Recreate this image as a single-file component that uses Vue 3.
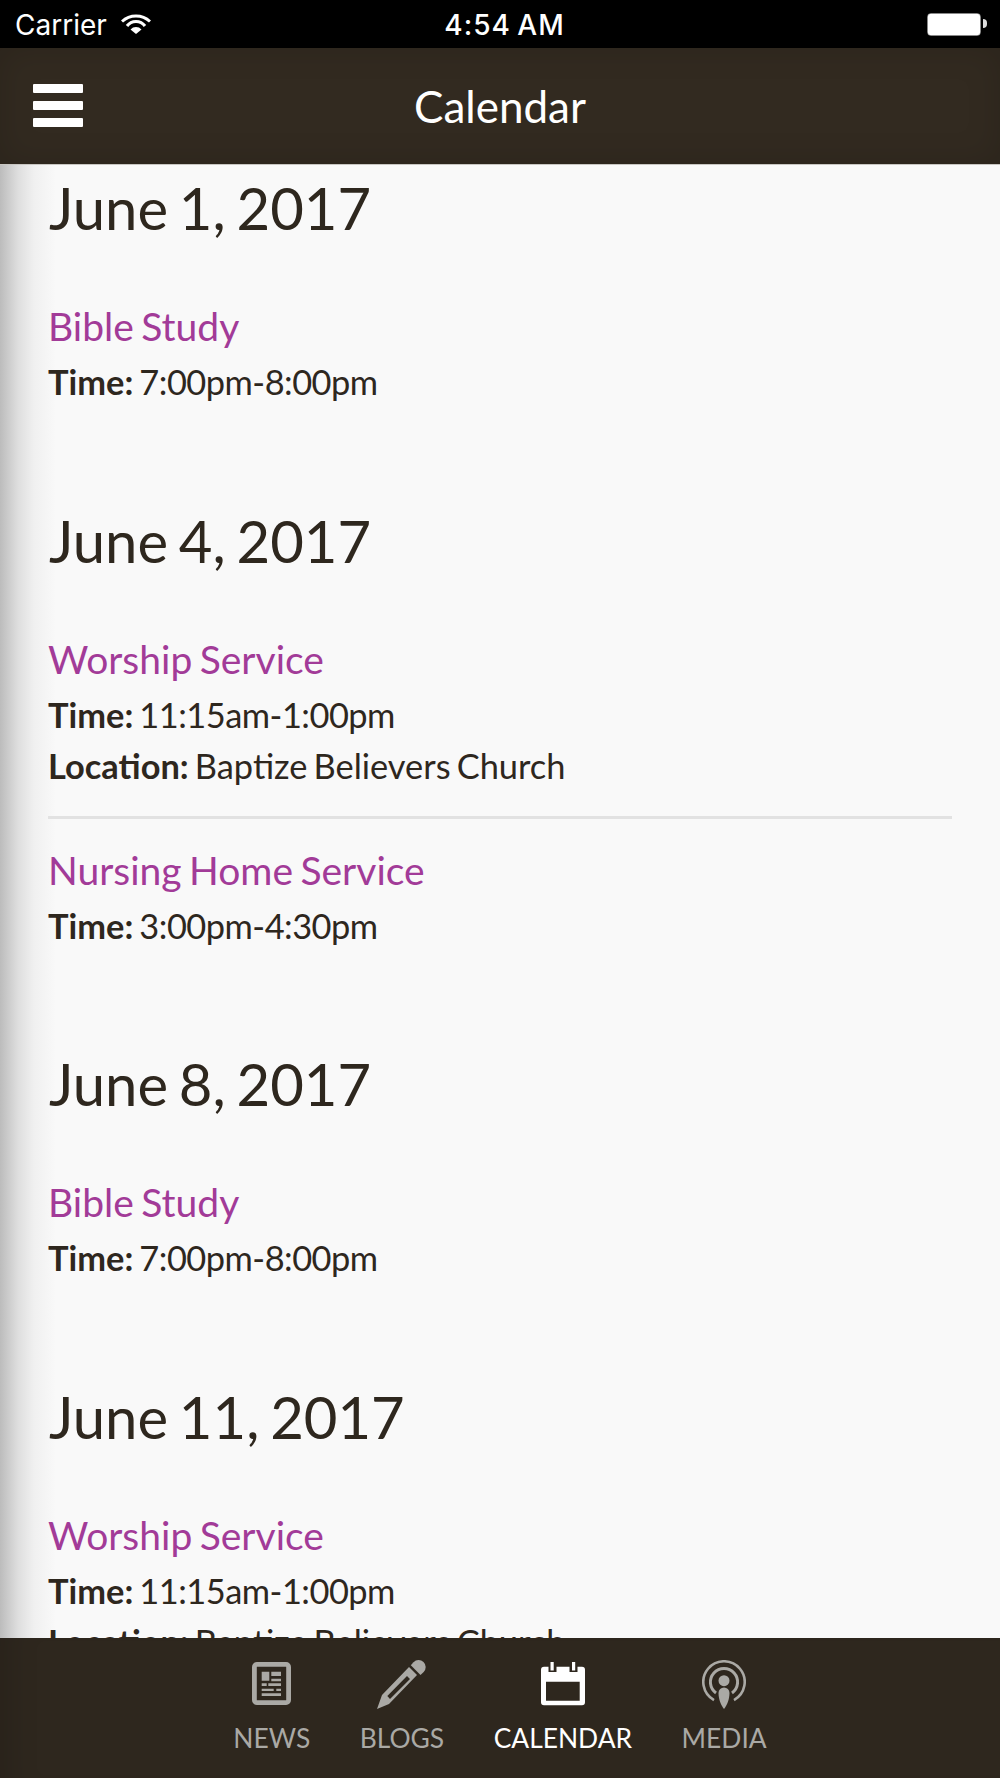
<script setup>
const days = [
  { date: 'June 1, 2017', events: [{ title: 'Bible Study', time: '7:00pm-8:00pm' }] },
  { date: 'June 4, 2017', events: [
    { title: 'Worship Service', time: '11:15am-1:00pm', location: 'Baptize Believers Church' },
    { title: 'Nursing Home Service', time: '3:00pm-4:30pm' }] },
  { date: 'June 8, 2017', events: [{ title: 'Bible Study', time: '7:00pm-8:00pm' }] },
  { date: 'June 11, 2017', events: [{ title: 'Worship Service', time: '11:15am-1:00pm', location: 'Baptize Believers Church' }] }
]
</script>

<template>
  <div class="phone">
    <header class="status">
      <div class="status-left">
        <span>Carrier</span>
        <svg class="wifi" viewBox="0 0 30 20" width="30" height="20">
          <path d="M1 7.500A20.500 20.500 0 0 1 29 7.500" fill="none" stroke="#fff" stroke-width="3"/>
          <path d="M6 12A11.200 11.200 0 0 1 24 12" fill="none" stroke="#fff" stroke-width="3"/>
          <path d="M9.500 15.500a7.500 7.500 0 0 1 11 0L15 20z" fill="#fff"/>
        </svg>
      </div>
      <span class="clock">4:54 AM</span>
      <div class="battery"><div class="battery-fill"></div><span class="nub"></span></div>
    </header>

    <nav class="navbar">
      <div class="burger"><i></i><i></i><i></i></div>
      <h1>Calendar</h1>
    </nav>

    <main class="content">
      <section v-for="day in days" :key="day.date" class="day">
        <h2>{{ day.date }}</h2>
        <article v-for="(ev, i) in day.events" :key="i" class="event">
          <h3>{{ ev.title }}</h3>
          <p><b>Time:</b> <span class="time">{{ ev.time }}</span></p>
          <p v-if="ev.location"><b>Location:</b> {{ ev.location }}</p>
        </article>
      </section>
    </main>

    <footer class="tabs">
      <div class="tab">
        <svg viewBox="0 0 39 49" width="39" height="49">
          <rect x="2.400" y="4.400" width="34.200" height="38.200" rx="2.500" fill="none" stroke="currentColor" stroke-width="4.800"/>
          <path d="M9.700 11.700h7.600v9h-7.600zM19.300 11.700H29V16h-9.700zM19.300 18.700H29v2.600h-9.700zM9.700 23.300h5V26h-5zM16.300 23.300H29V26H16.300zM9.700 28.700h12V31h-12zM24.300 28.700H29V31h-4.700zM9.700 33.300H29V36H9.700z" fill="currentColor"/>
        </svg>
        <span>NEWS</span>
      </div>
      <div class="tab">
        <svg viewBox="0 0 49 49" width="49" height="49">
          <path d="M33.800 5.200l2.700-3A7 7 0 0 1 46.700 12l-3.200 3z" fill="currentColor"/>
          <path fill-rule="evenodd" d="M32 7l8 8L12 44 0 49l5-14zM30 16L10.300 36l2.700 3 20-20z" fill="currentColor"/>
        </svg>
        <span>BLOGS</span>
      </div>
      <div class="tab">
        <svg class="active-icon" viewBox="0 0 44 49" width="44" height="49">
          <path fill-rule="evenodd" d="M3 6.700h4.500V12h8V6.700h13V12h8V6.700H41a3 3 0 0 1 3 3v32.600a3 3 0 0 1-3 3H3a3 3 0 0 1-3-3V9.700a3 3 0 0 1 3-3zM5 21.700v19h33.700v-19z" fill="currentColor"/>
          <path d="M9.500 2h3.200v8.500H9.500zM31 2h3.200v8.500H31z" fill="currentColor"/>
        </svg>
        <span class="active">CALENDAR</span>
      </div>
      <div class="tab">
        <svg viewBox="0 0 44 49" width="44" height="49">
          <path d="M12 40.100A20.700 20.700 0 1 1 32 40.100" fill="none" stroke="currentColor" stroke-width="2.600"/>
          <path d="M14 33A13.600 13.600 0 1 1 30 33" fill="none" stroke="currentColor" stroke-width="3"/>
          <circle cx="22" cy="20.700" r="5.500" fill="currentColor"/>
          <path d="M16.500 33a5.500 5.500 0 0 1 11 0c0 6-2.500 12.500-5.500 16-3-3.500-5.500-10-5.500-16z" fill="currentColor"/>
        </svg>
        <span>MEDIA</span>
      </div>
    </footer>
  </div>
</template>

<style scoped>
.phone {
  width: 1000px;
  height: 1778px;
  display: flex;
  flex-direction: column;
  overflow: hidden;
  font-family: Lato, "Open Sans", sans-serif;
  color: #2e271e;
  background: #f9f9f9;
}
.status {
  box-sizing: border-box;
  height: 48px;
  flex: none;
  background: #000;
  color: #fff;
  display: grid;
  grid-template-columns: 1fr auto 1fr;
  align-items: center;
  padding: 2px 14px 0 15px;
  font-size: 28px;
  font-family: Inter, "Open Sans", sans-serif;
}
.status-left { display: flex; align-items: center; gap: 14px; }
.clock { font-weight: 500; letter-spacing: 1px; word-spacing: -2px; margin-left: 8px; }
.wifi { margin-top: -2px; }
.battery {
  box-sizing: border-box;
  position: relative;
  justify-self: end;
  width: 54px;
  height: 23px;
  border: 1.500px solid #888;
  border-radius: 4px;
  margin-right: 5px;
  margin-top: -1px;
}
.battery-fill { height: 100%; background: #fff; border-radius: 2px; }
.nub {
  position: absolute;
  right: -7px;
  top: 5px;
  width: 4px;
  height: 9px;
  background: #ddd;
  border-radius: 0 4px 4px 0;
}
.navbar {
  box-sizing: border-box;
  height: 117px;
  flex: none;
  background: #322a20;
  box-shadow: inset 0 0 34px rgba(0, 0, 0, .14);
  border-bottom: 1px solid #c8c6c2;
  position: relative;
  display: flex;
  align-items: center;
  justify-content: center;
  color: #fff;
}
.navbar h1 { margin: 0; font-size: 44px; font-weight: 400; }
.burger {
  position: absolute;
  left: 33px;
  top: 36px;
  width: 50px;
  display: flex;
  flex-direction: column;
  gap: 8px;
}
.burger i { display: block; height: 9px; background: #fff; border-radius: 1px; }
.content {
  flex: 1;
  min-height: 0;
  overflow: hidden;
  padding: 0 48px;
  background: linear-gradient(90deg, #bcbcbc 0, #dedede 18px, #f0f0f0 34px, #f9f9f9 56px);
}
.day { padding-bottom: 65.500px; }
h2 { margin: -1px 0 23px 1px; font-size: 58px; font-weight: 400; line-height: 88px; word-spacing: -4px; }
.event { padding-top: 26px; padding-bottom: 25px; }
.event + .event { border-top: 3px solid #e2e2e2; }
h3 { margin: 0 0 5px; font-size: 39px; font-weight: 400; line-height: 50px; color: #a23b98; word-spacing: -2.500px; }
p { margin: 0; font-size: 34.400px; line-height: 51px; word-spacing: -2.700px; }
b { font-weight: 700; }
.time { letter-spacing: -.5px; }
.tabs {
  box-sizing: border-box;
  height: 140px;
  flex: none;
  background: #2e271e;
  box-shadow: inset 34px 0 30px -24px rgba(0, 0, 0, .12);
  display: flex;
  justify-content: center;
  gap: 49.500px;
  color: #aaa9a5;
  font-size: 26.400px;
  padding: 22px 0 0;
}
.tab {
  display: flex;
  flex-direction: column;
  align-items: center;
  gap: 13px;
}
.tab svg { display: block; }
.tab .active, .tab .active-icon { color: #fff; }
</style>
